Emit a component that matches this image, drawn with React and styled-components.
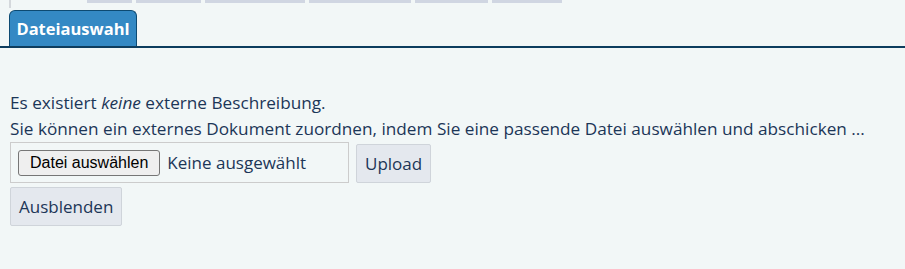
import styled, { createGlobalStyle } from "styled-components";

const GlobalStyle = createGlobalStyle`
  body {
    margin: 0;
    background: #f2f7f7;
    font-family: "Open Sans", "Noto Sans", sans-serif;
    color: #1c3657;
  }
`;

const Page = styled.div`
  width: 905px;
  height: 269px;
  overflow: hidden;
`;

const TopStrip = styled.div`
  display: flex;
  align-items: flex-start;
  height: 10px;
  padding-left: 9px;
`;

const Rule = styled.div`
  width: 2px;
  height: 8px;
  background: #d4d8dc;
  margin-right: 76px;
`;

const GhostTab = styled.div`
  width: ${(p) => p.w}px;
  height: 3px;
  margin-right: 4px;
  background: #d0d6e2;
`;

const TabBar = styled.div`
  display: flex;
  padding-left: 9px;
  border-bottom: 2px solid #0d3d5e;
`;

const Tab = styled.div`
  box-sizing: border-box;
  height: 36px;
  width: 128px;
  display: flex;
  align-items: center;
  justify-content: center;
  background: #3489c4;
  border: 1px solid #0d4a72;
  border-bottom: none;
  border-radius: 6px 6px 0 0;
  color: #fff;
  font-weight: 700;
  font-size: 16.5px;
`;

const Content = styled.div`
  padding: 42px 10px 0;
`;

const Line = styled.p`
  margin: 0;
  font-size: 17.2px;
  line-height: 26px;
`;

const Row = styled.div`
  display: flex;
  align-items: flex-start;
  gap: 7px;
`;

const FileBox = styled.div`
  box-sizing: border-box;
  width: 339px;
  height: 41px;
  border: 1px solid #cccccc;
  display: flex;
  align-items: center;
  padding-left: 7px;
  gap: 7px;
`;

const FileButton = styled.button`
  box-sizing: border-box;
  height: 26px;
  padding: 0 11px;
  font-family: "Liberation Sans", Arial, sans-serif;
  font-size: 16px;
  color: #000;
  background: #efefef;
  border: 1px solid #767676;
  border-radius: 3px;
`;

const FileName = styled.span`
  font-size: 17px;
`;

const Button = styled.button`
  box-sizing: border-box;
  height: 39px;
  padding: 0 8px;
  margin-top: ${(p) => p.top || 0}px;
  font-family: "Open Sans", "Noto Sans", sans-serif;
  font-size: 17px;
  color: #1c3657;
  background: #e4e8ee;
  border: 1px solid #cfd4da;
  border-radius: 2px;
`;

const ghostTabs = [45, 65, 100, 102, 73, 70];

export default function App() {
  return (
    <Page>
      <GlobalStyle />
      <TopStrip>
        <Rule />
        {ghostTabs.map((w, i) => (
          <GhostTab key={i} w={w} />
        ))}
      </TopStrip>
      <TabBar>
        <Tab>Dateiauswahl</Tab>
      </TabBar>
      <Content>
        <Line>
          Es existiert <em>keine</em> externe Beschreibung.
        </Line>
        <Line>
          Sie können ein externes Dokument zuordnen, indem Sie eine passende Datei auswählen und abschicken ...
        </Line>
        <Row>
          <FileBox>
            <FileButton>Datei auswählen</FileButton>
            <FileName>Keine ausgewählt</FileName>
          </FileBox>
          <Button top={2}>Upload</Button>
        </Row>
        <Row>
          <Button top={4}>Ausblenden</Button>
        </Row>
      </Content>
    </Page>
  );
}
